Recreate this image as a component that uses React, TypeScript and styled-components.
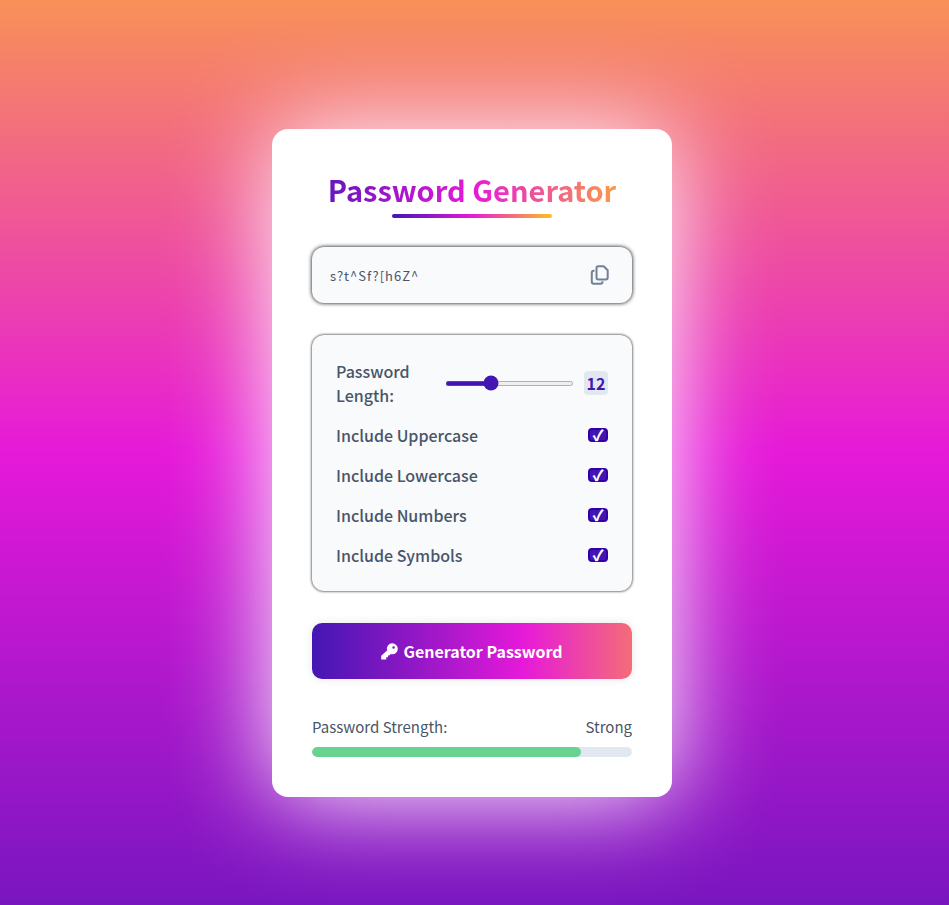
import React, { useState } from "react";
import styled, { createGlobalStyle } from "styled-components";

const Global = createGlobalStyle`
  *, *::before, *::after { box-sizing: border-box; }
  body {
    margin: 0;
    font-family: "Noto Sans CJK JP", "Noto Sans", sans-serif;
    color: #4a5568;
    background: #e619d9;
  }
  button, input { font-family: inherit; }
`;

const Page = styled.main`
  min-height: 100vh;
  display: flex;
  align-items: center;
  justify-content: center;
  padding: 21px 25px 0 20px;
  background: linear-gradient(to bottom, #f89158, #e619d9 50%, #7916c0);
`;

const Card = styled.section`
  width: 100%;
  max-width: 400px;
  padding: 40px;
  border-radius: 16px;
  background: #fff;
  box-shadow: 0 0 100px #fff;
`;

const Title = styled.h1`
  margin: 0 0 4px;
  font-size: 29px;
  line-height: 41px;
  font-weight: 700;
  text-align: center;
  color: transparent;
  background: linear-gradient(to right, #4316b3 -8%, #e619d9 50%, #ffbf1f 108%);
  background-clip: text;
`;

const Underline = styled.div`
  width: 50%;
  height: 4px;
  margin: 0 auto 29px;
  border-radius: 2px;
  background: linear-gradient(to right, #4316b3, #e619d9 50%, #ffbf1f);
`;

const Panel = styled.div`
  border-radius: 12px;
  background: #f8fafc;
  box-shadow: 0 0 3px #000;
`;

const Output = styled(Panel)`
  display: flex;
  align-items: center;
  height: 56px;
  margin-bottom: 32px;
  padding: 0 18px;
  box-shadow: 0 0 4px #000;
`;

const PasswordField = styled.input`
  flex: 1;
  min-width: 0;
  padding: 0;
  border: 0;
  outline: 0;
  background: none;
  color: #4a5568;
  font-size: 13px;
  letter-spacing: 1px;
`;

const CopyButton = styled.button`
  display: flex;
  padding: 4px;
  border: 0;
  background: none;
  color: #718096;
  cursor: pointer;
`;

const Options = styled(Panel)`
  display: flex;
  flex-direction: column;
  gap: 16px;
  margin-bottom: 32px;
  padding: 24px;
`;

const Row = styled.div`
  display: flex;
  align-items: center;
  justify-content: space-between;
`;

const Label = styled.label`
  font-size: 16px;
  line-height: 24px;
  font-weight: 500;
`;

const LengthLabel = styled(Label)`
  width: 109px;
  padding-right: 30px;
`;

const Slider = styled.input`
  flex: 1;
  min-width: 0;
  height: 5px;
  margin: 0 10px 0 0;
  accent-color: #4316b3;
`;

const LengthValue = styled.output`
  width: 24px;
  border-radius: 4px;
  background: #e2e8f0;
  color: #4316b3;
  font-size: 16px;
  line-height: 24px;
  font-weight: 700;
  text-align: center;
`;

const Check = styled.input`
  appearance: none;
  display: grid;
  place-items: center;
  width: 20px;
  height: 14px;
  margin: 0;
  border: 2px solid #3300a8;
  border-radius: 4px;
  background: #fff;
  &:checked { background: #4316b3; }
  &:checked::before {
    content: "✓";
    color: #fff;
    font: 900 15px/10px "Noto Sans CJK JP", sans-serif;
  }
`;

const Generate = styled.button`
  display: flex;
  align-items: center;
  justify-content: center;
  gap: 5px;
  width: 100%;
  height: 56px;
  margin-bottom: 36px;
  border: 0;
  border-radius: 10px;
  background: linear-gradient(to right, #4316b3, #e619d9 66%, #f46c79);
  box-shadow: 0 0 10px rgba(0, 0, 0, 0.1);
  color: #fff;
  font-size: 16px;
  font-weight: 700;
  cursor: pointer;
`;

const Strength = styled.div`
  display: flex;
  justify-content: space-between;
  margin-bottom: 8px;
  font-size: 15px;
  line-height: 24px;
`;

const Track = styled.div`
  height: 10px;
  overflow: hidden;
  border-radius: 5px;
  background: #e2e8f0;
`;

const Fill = styled.div`
  height: 100%;
  border-radius: 5px;
  background: #68d391;
`;

const CopyIcon = () => (
  <svg width="20" height="20" viewBox="0 0 20 20" fill="none" stroke="currentColor" strokeWidth="2" strokeLinejoin="round">
    <path d="M8.5 1.2h5.2l4 4v7.2a2 2 0 0 1-2 2H8.5a2 2 0 0 1-2-2V3.2a2 2 0 0 1 2-2z" />
    <path d="M4.5 5.8h-.7a2 2 0 0 0-2 2v9a2 2 0 0 0 2 2h6.7a2 2 0 0 0 2-2v-.5" />
  </svg>
);

const KeyIcon = () => (
  <svg width="17" height="17" viewBox="0 0 17 17" fill="currentColor" fillRule="evenodd">
    <path d="M11.3.3a5.5 5.5 0 0 1 0 11c-.6 0-1.200-.1-1.700-.3L8.300 12.400H7v1.800H5.200V16.500H.8a.6.6 0 0 1-.6-.6V13.200c0-.3.100-.500.300-.700L6.100 7.400A5.500 5.500 0 0 1 11.300.3zM12.600 3.200a1.300 1.300 0 1 0 0 2.600 1.300 1.300 0 0 0 0-2.600z" />
  </svg>
);

const sets = [
  { name: "Uppercase", chars: "ABCDEFGHIJKLMNOPQRSTUVWXYZ" },
  { name: "Lowercase", chars: "abcdefghijklmnopqrstuvwxyz" },
  { name: "Numbers", chars: "0123456789" },
  { name: "Symbols", chars: "!@#$%^&*()-_=+[]{}?" },
];

export default function App() {
  const [length, setLength] = useState(12);
  const [password, setPassword] = useState("s?t^Sf?[h6Z^");
  const [enabled, setEnabled] = useState([true, true, true, true]);

  const generate = () => {
    const chars = sets.filter((_, i) => enabled[i]).map((s) => s.chars).join("");
    setPassword(
      Array.from({ length }, () => chars.charAt(Math.floor(Math.random() * chars.length))).join("")
    );
  };
  const score = Math.min(100, length * 4 + enabled.filter(Boolean).length * 9);

  return (
    <>
      <Global />
      <Page>
        <Card>
          <Title>Password Generator</Title>
          <Underline />
          <Output>
            <PasswordField aria-label="Generated password" readOnly value={password} />
            <CopyButton aria-label="Copy password" onClick={() => navigator.clipboard?.writeText(password)}>
              <CopyIcon />
            </CopyButton>
          </Output>
          <Options>
            <Row>
              <LengthLabel htmlFor="length">Password Length:</LengthLabel>
              <Slider id="length" type="range" min={4} max={28} value={length} onChange={(e) => setLength(Number(e.target.value))} />
              <LengthValue htmlFor="length">{length}</LengthValue>
            </Row>
            {sets.map((set, i) => (
              <Row key={set.name}>
                <Label htmlFor={set.name}>Include {set.name}</Label>
                <Check
                  id={set.name}
                  type="checkbox"
                  checked={enabled[i]}
                  onChange={() => setEnabled(enabled.map((on, j) => (j === i ? !on : on)))}
                />
              </Row>
            ))}
          </Options>
          <Generate onClick={generate}>
            <KeyIcon />
            Generator Password
          </Generate>
          <Strength>
            <span>Password Strength:</span>
            <span>{score > 66 ? "Strong" : score > 40 ? "Medium" : "Weak"}</span>
          </Strength>
          <Track>
            <Fill style={{ width: `${score}%` }} />
          </Track>
        </Card>
      </Page>
    </>
  );
}
